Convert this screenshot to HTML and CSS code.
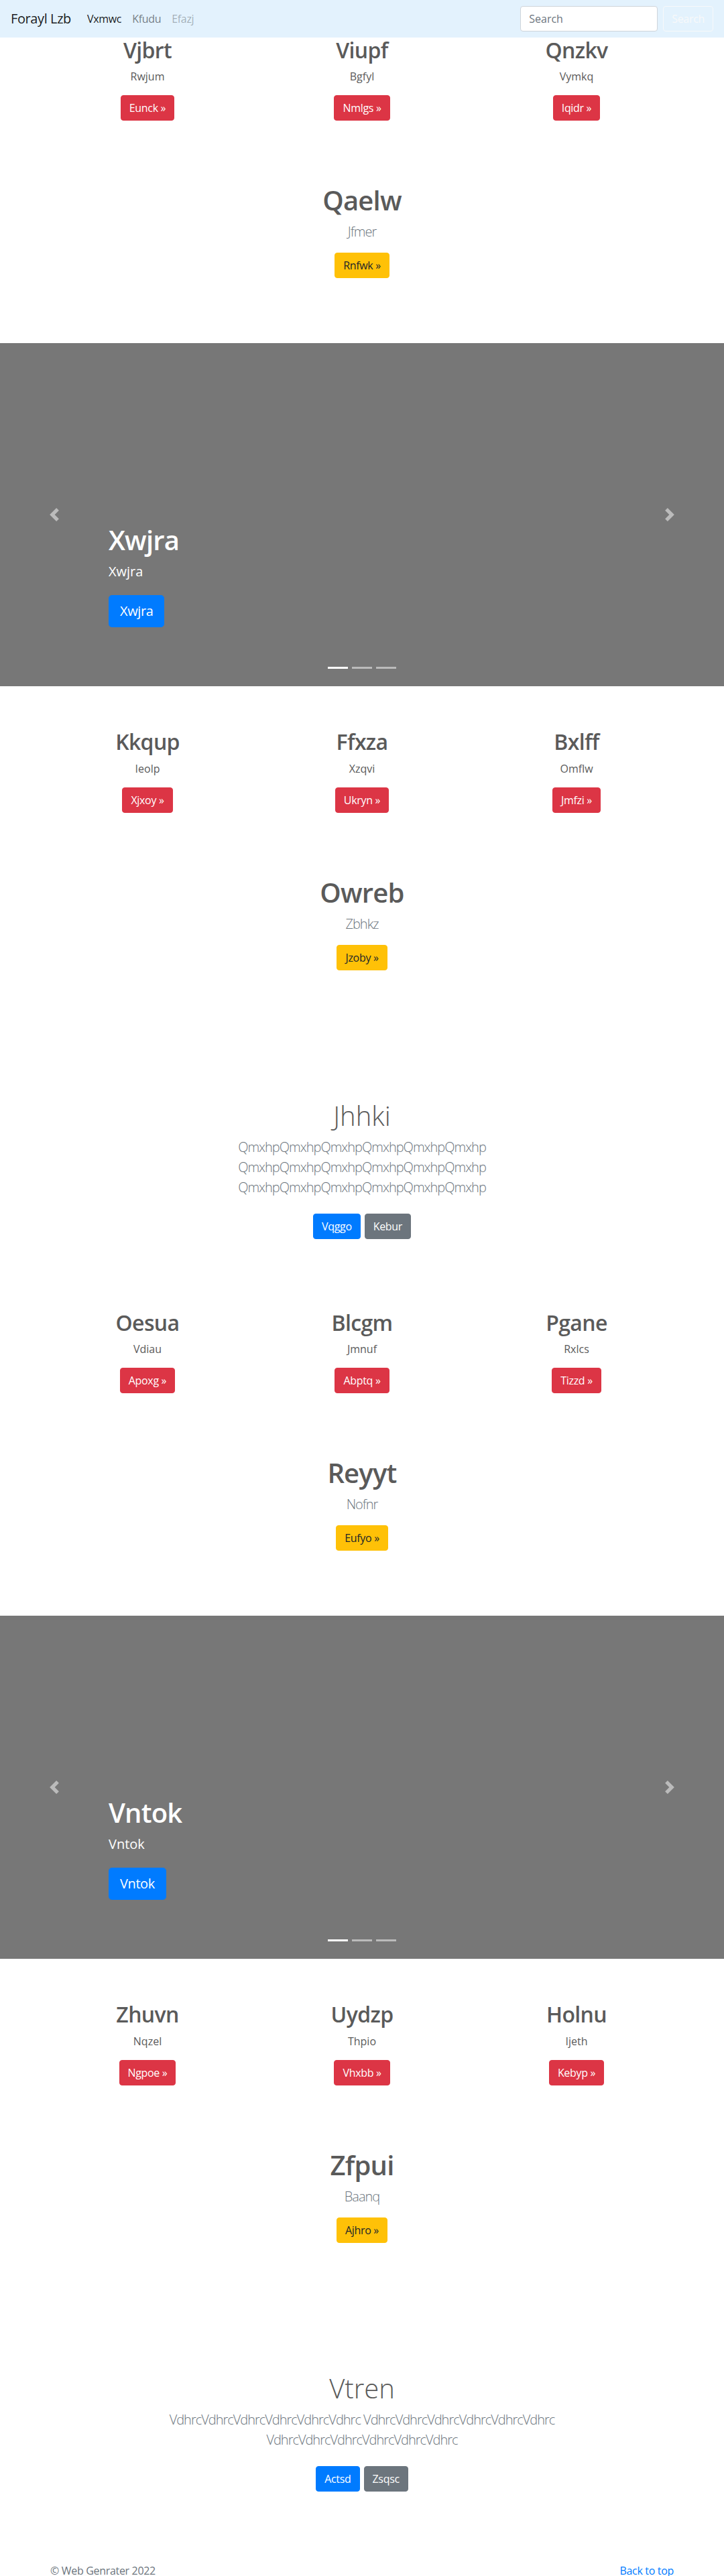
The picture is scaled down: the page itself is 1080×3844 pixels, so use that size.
FILE: index.html
```html
<!DOCTYPE html>
<html lang="en">
<head>
<meta charset="utf-8">
<title>Forayl Lzb</title>
<link rel="stylesheet" href="styles.css">
</head>
<body>
<nav class="navbar">
  <a class="brand" href="#">Forayl Lzb</a>
  <ul class="nav">
    <li><a class="nav-link active" href="#">Vxmwc</a></li>
    <li><a class="nav-link" href="#">Kfudu</a></li>
    <li><a class="nav-link disabled" href="#">Efazj</a></li>
  </ul>
  <form class="search">
    <input class="search-input" type="text" placeholder="Search">
    <button class="btn btn-outline-light" type="button">Search</button>
  </form>
</nav>

<main>
  <section class="container marketing">
    <div class="row">
      <div class="col">
        <h2>Vjbrt</h2>
        <p>Rwjum</p>
        <p><a class="btn btn-danger" href="#">Eunck &raquo;</a></p>
      </div>
      <div class="col">
        <h2>Viupf</h2>
        <p>Bgfyl</p>
        <p><a class="btn btn-danger" href="#">Nmlgs &raquo;</a></p>
      </div>
      <div class="col">
        <h2>Qnzkv</h2>
        <p>Vymkq</p>
        <p><a class="btn btn-danger" href="#">Iqidr &raquo;</a></p>
      </div>
    </div>
  </section>

  <section class="container featurette">
    <h1 class="featurette-heading">Qaelw</h1>
    <p class="lead text-muted">Jfmer</p>
    <p><a class="btn btn-warning" href="#">Rnfwk &raquo;</a></p>
  </section>

  <div class="carousel">
    <div class="slide"></div>
    <div class="caption">
      <h1>Xwjra</h1>
      <p>Xwjra</p>
      <p><a class="btn btn-lg btn-primary" href="#">Xwjra</a></p>
    </div>
    <ol class="indicators">
      <li class="active"></li>
      <li></li>
      <li></li>
    </ol>
    <a class="control control-prev" href="#" aria-label="Previous">
      <svg width="20" height="20" viewBox="0 0 8 8"><path fill="#fff" d="M5.25 0l-4 4 4 4 1.5-1.5L4.25 4l2.5-2.5L5.25 0z"/></svg>
    </a>
    <a class="control control-next" href="#" aria-label="Next">
      <svg width="20" height="20" viewBox="0 0 8 8"><path fill="#fff" d="M2.75 0l-1.5 1.5L3.75 4l-2.5 2.5L2.75 8l4-4-4-4z"/></svg>
    </a>
  </div>

  <section class="container marketing">
    <div class="row">
      <div class="col">
        <h2>Kkqup</h2>
        <p>Ieolp</p>
        <p><a class="btn btn-danger" href="#">Xjxoy &raquo;</a></p>
      </div>
      <div class="col">
        <h2>Ffxza</h2>
        <p>Xzqvi</p>
        <p><a class="btn btn-danger" href="#">Ukryn &raquo;</a></p>
      </div>
      <div class="col">
        <h2>Bxlff</h2>
        <p>Omflw</p>
        <p><a class="btn btn-danger" href="#">Jmfzi &raquo;</a></p>
      </div>
    </div>
  </section>

  <section class="container featurette">
    <h1 class="featurette-heading">Owreb</h1>
    <p class="lead text-muted">Zbhkz</p>
    <p><a class="btn btn-warning" href="#">Jzoby &raquo;</a></p>
  </section>

  <section class="jumbotron">
    <div class="jumbo-inner">
      <h1 class="jumbotron-heading">Jhhki</h1>
      <p class="lead text-muted">QmxhpQmxhpQmxhpQmxhpQmxhpQmxhp QmxhpQmxhpQmxhpQmxhpQmxhpQmxhp QmxhpQmxhpQmxhpQmxhpQmxhpQmxhp</p>
      <p class="actions"><a class="btn btn-primary" href="#">Vqggo</a><a class="btn btn-secondary" href="#">Kebur</a></p>
    </div>
  </section>

  <section class="container marketing">
    <div class="row">
      <div class="col">
        <h2>Oesua</h2>
        <p>Vdiau</p>
        <p><a class="btn btn-danger" href="#">Apoxg &raquo;</a></p>
      </div>
      <div class="col">
        <h2>Blcgm</h2>
        <p>Jmnuf</p>
        <p><a class="btn btn-danger" href="#">Abptq &raquo;</a></p>
      </div>
      <div class="col">
        <h2>Pgane</h2>
        <p>Rxlcs</p>
        <p><a class="btn btn-danger" href="#">Tizzd &raquo;</a></p>
      </div>
    </div>
  </section>

  <section class="container featurette">
    <h1 class="featurette-heading">Reyyt</h1>
    <p class="lead text-muted">Nofnr</p>
    <p><a class="btn btn-warning" href="#">Eufyo &raquo;</a></p>
  </section>

  <div class="carousel">
    <div class="slide"></div>
    <div class="caption">
      <h1>Vntok</h1>
      <p>Vntok</p>
      <p><a class="btn btn-lg btn-primary" href="#">Vntok</a></p>
    </div>
    <ol class="indicators">
      <li class="active"></li>
      <li></li>
      <li></li>
    </ol>
    <a class="control control-prev" href="#" aria-label="Previous">
      <svg width="20" height="20" viewBox="0 0 8 8"><path fill="#fff" d="M5.25 0l-4 4 4 4 1.5-1.5L4.25 4l2.5-2.5L5.25 0z"/></svg>
    </a>
    <a class="control control-next" href="#" aria-label="Next">
      <svg width="20" height="20" viewBox="0 0 8 8"><path fill="#fff" d="M2.75 0l-1.5 1.5L3.75 4l-2.5 2.5L2.75 8l4-4-4-4z"/></svg>
    </a>
  </div>

  <section class="container marketing">
    <div class="row">
      <div class="col">
        <h2>Zhuvn</h2>
        <p>Nqzel</p>
        <p><a class="btn btn-danger" href="#">Ngpoe &raquo;</a></p>
      </div>
      <div class="col">
        <h2>Uydzp</h2>
        <p>Thpio</p>
        <p><a class="btn btn-danger" href="#">Vhxbb &raquo;</a></p>
      </div>
      <div class="col">
        <h2>Holnu</h2>
        <p>Ijeth</p>
        <p><a class="btn btn-danger" href="#">Kebyp &raquo;</a></p>
      </div>
    </div>
  </section>

  <section class="container featurette">
    <h1 class="featurette-heading">Zfpui</h1>
    <p class="lead text-muted">Baanq</p>
    <p><a class="btn btn-warning" href="#">Ajhro &raquo;</a></p>
  </section>

  <section class="jumbotron">
    <div class="jumbo-inner">
      <h1 class="jumbotron-heading">Vtren</h1>
      <p class="lead text-muted">VdhrcVdhrcVdhrcVdhrcVdhrcVdhrc VdhrcVdhrcVdhrcVdhrcVdhrcVdhrc VdhrcVdhrcVdhrcVdhrcVdhrcVdhrc</p>
      <p class="actions"><a class="btn btn-primary" href="#">Actsd</a><a class="btn btn-secondary" href="#">Zsqsc</a></p>
    </div>
  </section>
</main>

<footer class="container footer">
  <p>&copy; Web Genrater 2022</p>
  <p><a class="top-link" href="#">Back to top</a></p>
</footer>
</body>
</html>
```

FILE: styles.css
```css
* {
  box-sizing: border-box;
}

html,
body {
  margin: 0;
}

body {
  font-family: "Open Sans", "Noto Sans", "Liberation Sans", sans-serif;
  font-size: 16px;
  line-height: 1.5;
  color: #5a5a5a;
  background: #fff;
}

h1,
h2,
p {
  margin: 0;
}

a {
  text-decoration: none;
}

/* Navbar */
.navbar {
  display: flex;
  align-items: center;
  height: 56px;
  padding: 8px 16px;
  background: #e3f2fd;
}

.brand {
  font-size: 20px;
  line-height: 30px;
  padding: 5px 0;
  margin-right: 16px;
  color: rgba(0, 0, 0, 0.9);
  letter-spacing: -0.02em;
}

.nav {
  display: flex;
  list-style: none;
  margin: 0;
  padding: 0;
}

.nav-link {
  display: block;
  padding: 8px;
  color: rgba(0, 0, 0, 0.5);
  letter-spacing: -0.02em;
}

.nav-link.active {
  color: rgba(0, 0, 0, 0.9);
}

.nav-link.disabled {
  color: rgba(0, 0, 0, 0.3);
}

.search {
  display: flex;
  align-items: center;
  margin: 0 0 0 auto;
}

.search-input {
  width: 205px;
  height: 38px;
  margin-right: 8px;
  padding: 6px 12px;
  font: inherit;
  color: #495057;
  background: #fff;
  border: 1px solid #ced4da;
  border-radius: 4px;
}

.search-input::placeholder {
  color: #6c757d;
}

/* Buttons */
.btn {
  display: inline-block;
  font-family: inherit;
  font-size: 16px;
  font-weight: 400;
  line-height: 1.5;
  padding: 6px 12px;
  border: 1px solid transparent;
  border-radius: 4px;
  text-align: center;
  vertical-align: middle;
  letter-spacing: -0.02em;
  cursor: pointer;
}

.btn-lg {
  padding: 8px 16px;
  font-size: 20px;
  border-radius: 4.8px;
}

.btn-danger {
  color: #fff;
  background: #dc3545;
  border-color: #dc3545;
}

.btn-warning {
  color: #212529;
  background: #ffc107;
  border-color: #ffc107;
}

.btn-primary {
  color: #fff;
  background: #007bff;
  border-color: #007bff;
}

.btn-secondary {
  color: #fff;
  background: #6c757d;
  border-color: #6c757d;
}

.btn-outline-light {
  color: #f8f9fa;
  background: transparent;
  border-color: #f8f9fa;
}

/* Layout */
.container {
  width: 960px;
  margin: 0 auto;
  padding: 0 15px;
}

.row {
  display: flex;
  margin: 0 -15px;
}

.col {
  width: 320px;
  padding: 0 15px;
  margin-bottom: 24px;
  text-align: center;
}

.col h2 {
  font-size: 32px;
  font-weight: 600;
  line-height: 1.2;
  margin-bottom: 8px;
  letter-spacing: -0.02em;
}

.col p {
  margin: 0 12px 16px;
}

.text-muted {
  color: #6c757d;
}

.lead {
  font-size: 20px;
  font-weight: 300;
  line-height: 30px;
  letter-spacing: -0.05em;
}

/* Featurette */
.featurette {
  text-align: center;
  padding-top: 55px;
  padding-bottom: 81px;
}

.featurette-heading {
  font-size: 40px;
  font-weight: 600;
  line-height: 1.2;
  margin-bottom: 8px;
  letter-spacing: -0.02em;
}

.featurette .lead {
  margin-bottom: 16px;
}

.featurette p:last-child {
  margin-bottom: 16px;
}

/* Carousel */
.carousel {
  position: relative;
  height: 512px;
  margin-bottom: 64px;
}

.slide {
  height: 100%;
  background: #777;
}

.caption {
  position: absolute;
  left: 15%;
  right: 15%;
  bottom: 52px;
  padding: 20px 0;
  color: #fff;
  text-align: left;
}

.caption h1 {
  font-size: 40px;
  font-weight: 600;
  line-height: 1.2;
  margin-bottom: 8px;
  letter-spacing: -0.02em;
}

.caption p {
  font-size: 20px;
  line-height: 30px;
  margin-bottom: 20px;
}

.caption p:last-child {
  margin-bottom: 16px;
}

.indicators {
  position: absolute;
  left: 0;
  right: 0;
  bottom: 0;
  display: flex;
  justify-content: center;
  list-style: none;
  margin: 0 0 16px;
  padding: 0;
}

.indicators li {
  box-sizing: content-box;
  width: 30px;
  height: 3px;
  margin: 0 3px;
  background: #fff;
  background-clip: padding-box;
  border-top: 10px solid transparent;
  border-bottom: 10px solid transparent;
  opacity: 0.5;
}

.indicators li.active {
  opacity: 1;
}

.control {
  position: absolute;
  top: 0;
  bottom: 0;
  width: 15%;
  display: flex;
  align-items: center;
  justify-content: center;
  opacity: 0.5;
}

.control-prev {
  left: 0;
}

.control-next {
  right: 0;
}

.control svg {
  display: block;
}

/* Jumbotron */
.jumbotron {
  text-align: center;
  padding: 96px 0 98px;
}

.jumbo-inner {
  max-width: 640px;
  margin: 0 auto;
  padding: 0 15px;
}

.jumbotron-heading {
  font-size: 40px;
  font-weight: 300;
  line-height: 1.2;
  margin-bottom: 8px;
}

.jumbotron .lead {
  margin-bottom: 16px;
}

.actions {
  display: flex;
  justify-content: center;
  gap: 6px;
}

.actions .btn {
  margin: 8px 0;
}

/* Footer */
.footer {
  display: flex;
  justify-content: space-between;
  color: #6c757d;
  letter-spacing: -0.02em;
}

.footer p {
  margin-bottom: 4px;
}

.top-link {
  color: #007bff;
}
```
